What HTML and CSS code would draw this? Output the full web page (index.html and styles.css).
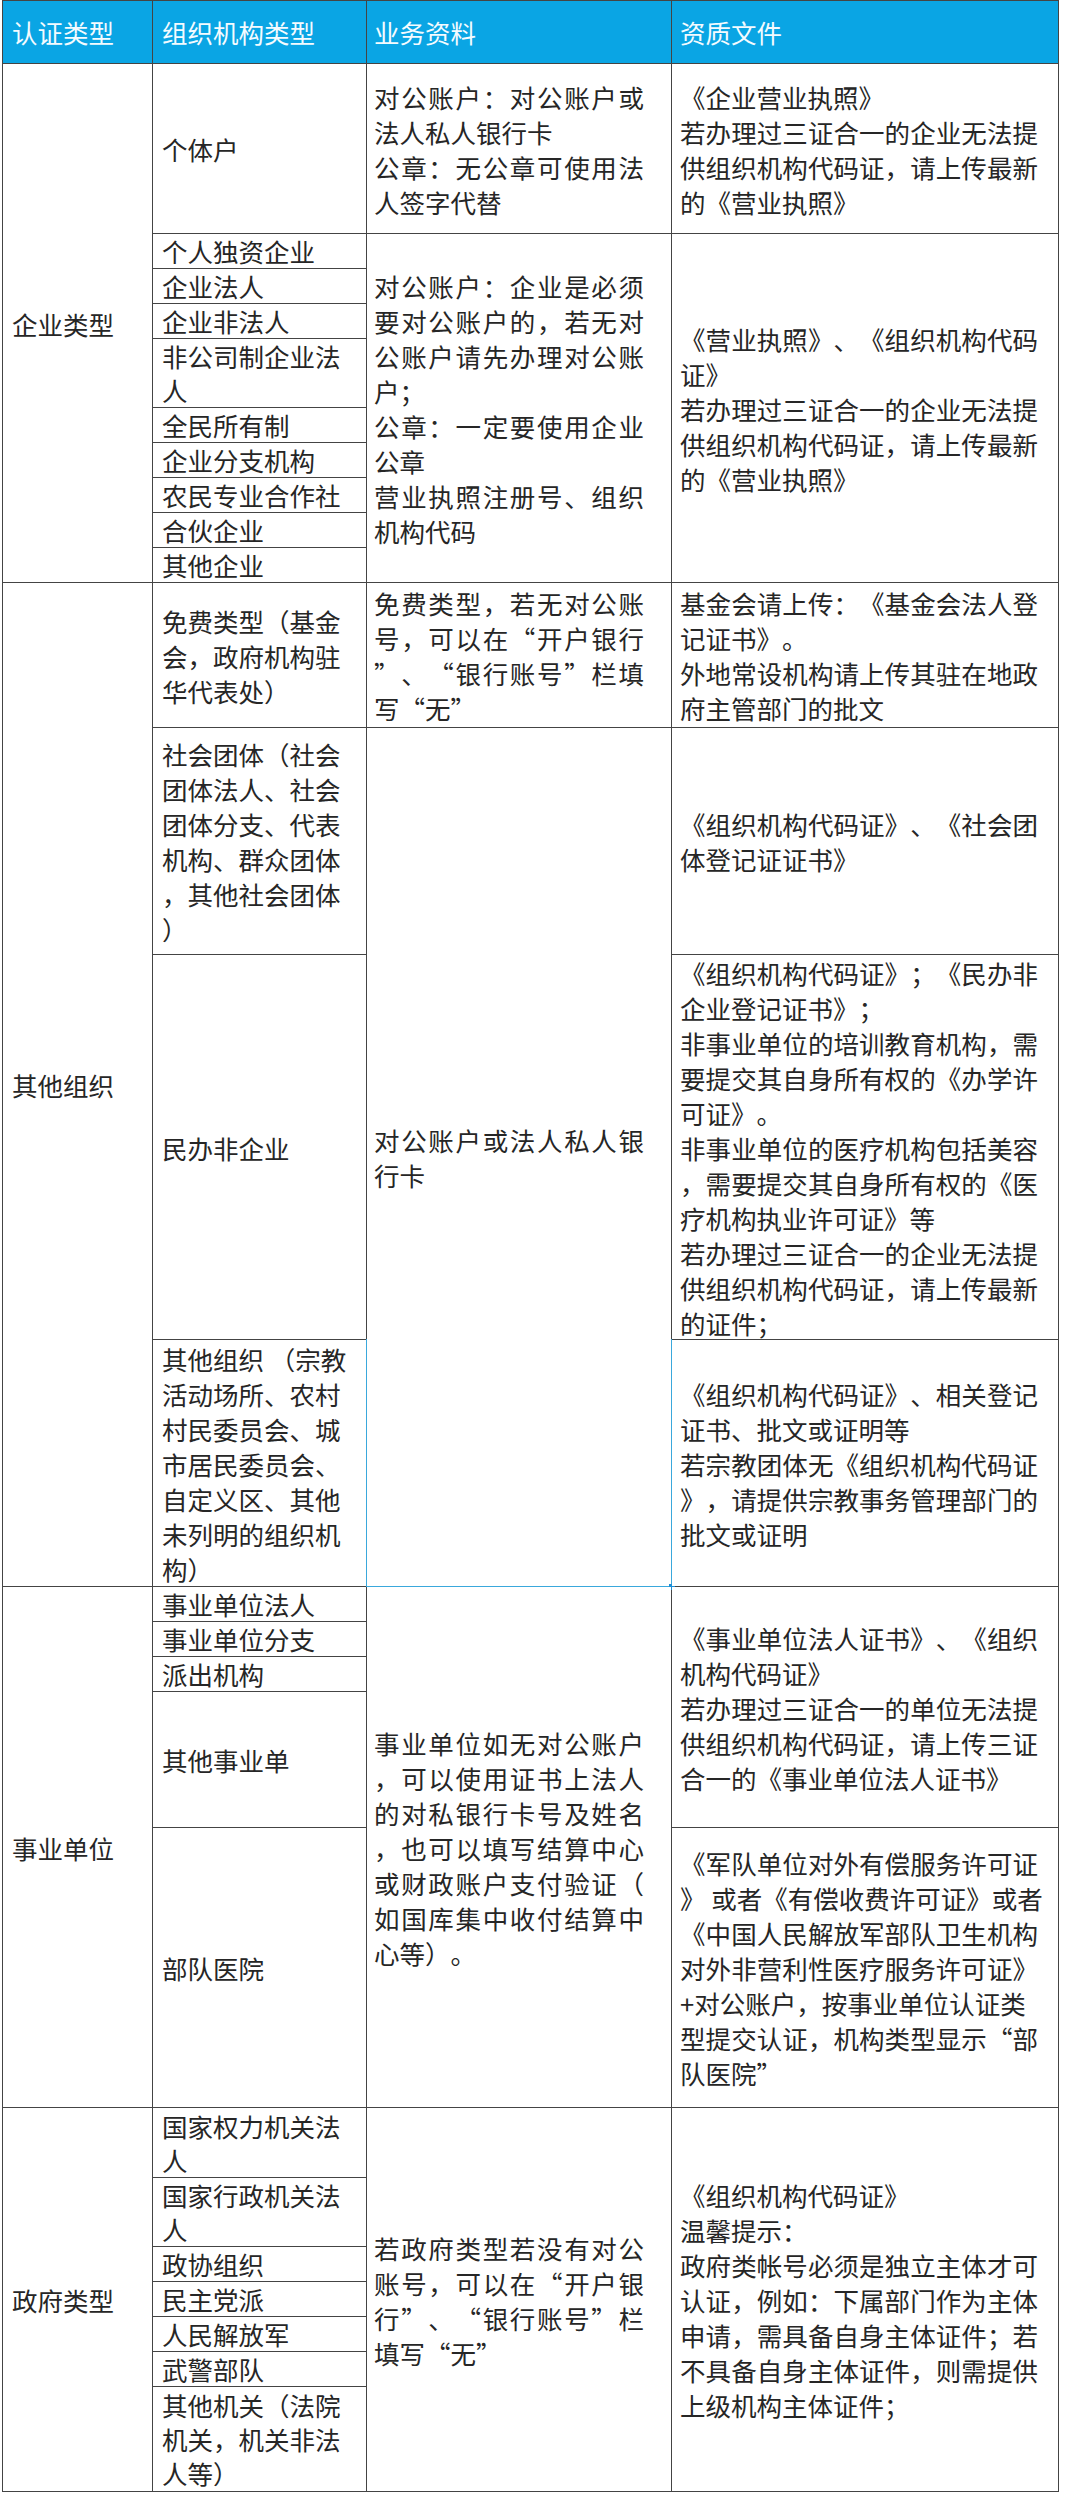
FILE: index.html
```html
<!DOCTYPE html>
<html lang="zh-CN">
<head>
<meta charset="utf-8">
<title>认证类型与资质文件</title>
<link rel="stylesheet" href="styles.css">
</head>
<body>
<div class="sheet">
  <div class="grid">
    <div class="cell hd k1">认证类型</div>
    <div class="cell hd k2">组织机构类型</div>
    <div class="cell hd k3">业务资料</div>
    <div class="cell hd k4">资质文件</div>

    <!-- 企业类型 -->
    <div class="cell k1 s10">企业类型</div>
    <div class="cell k2 sub">个体户</div>
    <div class="cell k3">
      <span class="ln j">对公账户：对公账户或</span>
      <span class="ln">法人私人银行卡</span>
      <span class="ln j">公章：无公章可使用法</span>
      <span class="ln">人签字代替</span>
    </div>
    <div class="cell k4">
      <span class="ln">《企业营业执照》</span>
      <span class="ln j">若办理过三证合一的企业无法提</span>
      <span class="ln j">供组织机构代码证，请上传最新</span>
      <span class="ln">的《营业执照》</span>
    </div>

    <div class="cell k2 sub">个人独资企业</div>
    <div class="cell k3 s9">
      <span class="ln j">对公账户：企业是必须</span>
      <span class="ln j">要对公账户的，若无对</span>
      <span class="ln j">公账户请先办理对公账</span>
      <span class="ln">户；</span>
      <span class="ln j">公章：一定要使用企业</span>
      <span class="ln">公章</span>
      <span class="ln j">营业执照注册号、组织</span>
      <span class="ln">机构代码</span>
    </div>
    <div class="cell k4 s9">
      <span class="ln j">《营业执照》、《组织机构代码</span>
      <span class="ln">证》</span>
      <span class="ln j">若办理过三证合一的企业无法提</span>
      <span class="ln j">供组织机构代码证，请上传最新</span>
      <span class="ln">的《营业执照》</span>
    </div>
    <div class="cell k2 sub">企业法人</div>
    <div class="cell k2 sub">企业非法人</div>
    <div class="cell k2 sub"><span class="ln">非公司制企业法</span><span class="ln">人</span></div>
    <div class="cell k2 sub">全民所有制</div>
    <div class="cell k2 sub">企业分支机构</div>
    <div class="cell k2 sub">农民专业合作社</div>
    <div class="cell k2 sub">合伙企业</div>
    <div class="cell k2 sub">其他企业</div>

    <!-- 其他组织 -->
    <div class="cell k1 s4">其他组织</div>
    <div class="cell k2">
      <span class="ln">免费类型（基金</span>
      <span class="ln">会，政府机构驻</span>
      <span class="ln">华代表处）</span>
    </div>
    <div class="cell k3">
      <span class="ln j">免费类型，若无对公账</span>
      <span class="ln j">号，可以在“开户银行</span>
      <span class="ln j">”、“银行账号”栏填</span>
      <span class="ln">写“无”</span>
    </div>
    <div class="cell k4">
      <span class="ln j">基金会请上传：《基金会法人登</span>
      <span class="ln">记证书》。</span>
      <span class="ln j">外地常设机构请上传其驻在地政</span>
      <span class="ln">府主管部门的批文</span>
    </div>

    <div class="cell k2">
      <span class="ln">社会团体（社会</span>
      <span class="ln">团体法人、社会</span>
      <span class="ln">团体分支、代表</span>
      <span class="ln">机构、群众团体</span>
      <span class="ln">，其他社会团体</span>
      <span class="ln">）</span>
    </div>
    <div class="cell k3 s3">
      <span class="ln j">对公账户或法人私人银</span>
      <span class="ln">行卡</span>
      <div class="selection"><span class="handle"></span></div>
    </div>
    <div class="cell k4">
      <span class="ln j">《组织机构代码证》、《社会团</span>
      <span class="ln">体登记证证书》</span>
    </div>

    <div class="cell k2">民办非企业</div>
    <div class="cell k4">
      <span class="ln j">《组织机构代码证》；《民办非</span>
      <span class="ln">企业登记证书》；</span>
      <span class="ln j">非事业单位的培训教育机构，需</span>
      <span class="ln j">要提交其自身所有权的《办学许</span>
      <span class="ln">可证》。</span>
      <span class="ln j">非事业单位的医疗机构包括美容</span>
      <span class="ln j">，需要提交其自身所有权的《医</span>
      <span class="ln">疗机构执业许可证》等</span>
      <span class="ln j">若办理过三证合一的企业无法提</span>
      <span class="ln j">供组织机构代码证，请上传最新</span>
      <span class="ln">的证件；</span>
    </div>

    <div class="cell k2">
      <span class="ln">其他组织<span class="hw"> </span>（宗教</span>
      <span class="ln">活动场所、农村</span>
      <span class="ln">村民委员会、城</span>
      <span class="ln">市居民委员会、</span>
      <span class="ln">自定义区、其他</span>
      <span class="ln">未列明的组织机</span>
      <span class="ln">构）</span>
    </div>
    <div class="cell k4">
      <span class="ln j">《组织机构代码证》、相关登记</span>
      <span class="ln">证书、批文或证明等</span>
      <span class="ln j">若宗教团体无《组织机构代码证</span>
      <span class="ln j">》，请提供宗教事务管理部门的</span>
      <span class="ln">批文或证明</span>
    </div>

    <!-- 事业单位 -->
    <div class="cell k1 s5">事业单位</div>
    <div class="cell k2 sub">事业单位法人</div>
    <div class="cell k3 s5">
      <span class="ln j">事业单位如无对公账户</span>
      <span class="ln j">，可以使用证书上法人</span>
      <span class="ln j">的对私银行卡号及姓名</span>
      <span class="ln j">，也可以填写结算中心</span>
      <span class="ln j">或财政账户支付验证（</span>
      <span class="ln j">如国库集中收付结算中</span>
      <span class="ln">心等）。</span>
    </div>
    <div class="cell k4 s4">
      <span class="ln j">《事业单位法人证书》、《组织</span>
      <span class="ln">机构代码证》</span>
      <span class="ln j">若办理过三证合一的单位无法提</span>
      <span class="ln j">供组织机构代码证，请上传三证</span>
      <span class="ln">合一的《事业单位法人证书》</span>
    </div>
    <div class="cell k2 sub">事业单位分支</div>
    <div class="cell k2 sub">派出机构</div>
    <div class="cell k2">其他事业单</div>
    <div class="cell k2">部队医院</div>
    <div class="cell k4">
      <span class="ln j">《军队单位对外有偿服务许可证</span>
      <span class="ln">》<span class="hw"> </span>或者《有偿收费许可证》或者</span>
      <span class="ln j">《中国人民解放军部队卫生机构</span>
      <span class="ln j">对外非营利性医疗服务许可证》</span>
      <span class="ln"><span class="hw">+</span>对公账户，按事业单位认证类</span>
      <span class="ln j">型提交认证，机构类型显示“部</span>
      <span class="ln">队医院”</span>
    </div>

    <!-- 政府类型 -->
    <div class="cell k1 s7">政府类型</div>
    <div class="cell k2 sub"><span class="ln">国家权力机关法</span><span class="ln">人</span></div>
    <div class="cell k3 s7">
      <span class="ln j">若政府类型若没有对公</span>
      <span class="ln j">账号，可以在“开户银</span>
      <span class="ln j">行”、“银行账号”栏</span>
      <span class="ln">填写“无”</span>
    </div>
    <div class="cell k4 s7">
      <span class="ln">《组织机构代码证》</span>
      <span class="ln">温馨提示：</span>
      <span class="ln j">政府类帐号必须是独立主体才可</span>
      <span class="ln j">认证，例如：下属部门作为主体</span>
      <span class="ln j">申请，需具备自身主体证件；若</span>
      <span class="ln j">不具备自身主体证件，则需提供</span>
      <span class="ln">上级机构主体证件；</span>
    </div>
    <div class="cell k2 sub"><span class="ln">国家行政机关法</span><span class="ln">人</span></div>
    <div class="cell k2 sub">政协组织</div>
    <div class="cell k2 sub">民主党派</div>
    <div class="cell k2 sub">人民解放军</div>
    <div class="cell k2 sub">武警部队</div>
    <div class="cell k2 sub"><span class="ln">其他机关（法院</span><span class="ln">机关，机关非法</span><span class="ln">人等）</span></div>
  </div>
</div>
</body>
</html>
```
FILE: styles.css
```css
* {
  box-sizing: border-box;
}

html,
body {
  margin: 0;
  padding: 0;
  background: #ffffff;
}

body {
  font-family: "Noto Sans CJK SC", "Noto Sans", sans-serif;
  font-size: 25.5px;
  color: #262626;
  text-spacing-trim: space-all;
  font-variant-east-asian: full-width;
}

.hw {
  font-variant-east-asian: normal;
}

.sheet {
  padding-left: 2px;
}

.grid {
  display: grid;
  width: 1057px;
  grid-template-columns: 149px 213px 304px 386px;
  grid-template-rows:
    62px
    169px 34px 34px 34px 68px 34px 34px 34px 34px 34px
    144px 226px 384px 246px
    34px 34px 34px 135px 279px
    69px 68px 34px 34px 34px 34px 104px;
  gap: 1px;
  padding: 1px;
  background: #444444;
}

.cell {
  position: relative;
  background: #ffffff;
  display: flex;
  flex-direction: column;
  justify-content: center;
  line-height: 35px;
  white-space: nowrap;
}

.cell.sub {
  line-height: 34px;
}

.hd {
  background: #0aa5e4;
  color: #f4fbff;
  line-height: 62px;
}

.k1 {
  padding: 0 8px 0 9px;
}

.k2 {
  padding: 0 8px 0 9px;
}

.k3 {
  padding: 0 27px 0 7px;
}

.k4 {
  padding: 0 20px 0 8px;
}

.s3 { grid-row: span 3; }
.s4 { grid-row: span 4; }
.s5 { grid-row: span 5; }
.s7 { grid-row: span 7; }
.s9 { grid-row: span 9; }
.s10 { grid-row: span 10; }

.ln {
  display: block;
}

.ln.j {
  text-align: justify;
  text-align-last: justify;
}

/* selection outline drawn over the lower part of the merged cell */
.selection {
  position: absolute;
  left: -1px;
  right: -1px;
  bottom: -1px;
  height: 248px;
  border: 1px solid #3aa8dc;
  border-top: none;
  pointer-events: none;
}

.handle {
  position: absolute;
  right: -4px;
  bottom: -4px;
  width: 6px;
  height: 6px;
  background: #1f8fd6;
}
```
